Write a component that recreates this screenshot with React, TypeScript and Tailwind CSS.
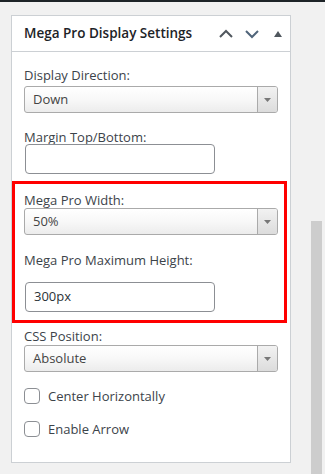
const font = { fontFamily: '"Open Sans", "Noto Sans", sans-serif' };

const Select = ({ value }: { value: string }) => (
  <div className="flex h-[27px] w-[254px] rounded-[3px] border border-[#aaaaaa] bg-gradient-to-b from-white via-[#f8f8f8] to-[#ececec] overflow-hidden">
    <div className="flex-1 flex items-center pl-[8px] text-[13px] text-[#444]">{value}</div>
    <div className="w-[20px] flex items-center justify-center border-l border-[#aaaaaa] bg-gradient-to-b from-[#f2f2f2] to-[#dcdcdc]">
      <svg width="7" height="4" viewBox="0 0 7 4">
        <path d="M0 0h7L3.5 4z" fill="#777" />
      </svg>
    </div>
  </div>
);

const TextInput = ({ value }: { value?: string }) => (
  <div className="h-[30px] w-[190px] rounded-[4px] border border-[#8c8f94] bg-white flex items-center pl-[8px] text-[13px] text-[#2c3338]">
    {value}
  </div>
);

const Label = ({ children }: { children: React.ReactNode }) => (
  <div className="text-[13px] leading-[18px] text-[#3c434a]">{children}</div>
);

const Checkbox = ({ label }: { label: string }) => (
  <div className="flex items-center gap-[8px]">
    <div className="w-[16px] h-[16px] rounded-[4px] border border-[#8c8f94] bg-white" />
    <span className="text-[13px] leading-[18px] text-[#3c434a]">{label}</span>
  </div>
);

export default function App() {
  return (
    <div className="w-[325px] h-[474px] bg-[#f1f1f1] border-t-2 border-[#1d2327] flex overflow-hidden" style={font}>
      <div className="ml-[11px] mt-[13px] w-[280px] h-[448px] bg-white border border-[#ccd0d4] flex flex-col">
        {/* header */}
        <div className="h-[36px] border-b border-[#ccd0d4] flex items-center pl-[12px] pr-[8px]">
          <h2 className="flex-1 text-[13.5px] font-semibold text-[#1d2327]">Mega Pro Display Settings</h2>
          <div className="flex items-center">
            <svg width="16" height="10" viewBox="0 0 16 10" className="mr-[10px]">
              <path d="M2 8l6-6 6 6" fill="none" stroke="#50575e" strokeWidth="2" />
            </svg>
            <svg width="16" height="10" viewBox="0 0 16 10" className="mr-[14px]">
              <path d="M2 2l6 6 6-6" fill="none" stroke="#50657a" strokeWidth="2" />
            </svg>
            <svg width="8" height="6" viewBox="0 0 8 6">
              <path d="M0 6L4 0l4 6z" fill="#50575e" />
            </svg>
          </div>
        </div>

        {/* body */}
        <div className="flex flex-col pt-[14px] pl-[12px]">
          <Label>Display Direction:</Label>
          <div className="mt-[2px]"><Select value="Down" /></div>

          <div className="mt-[15px]"><Label>Margin Top/Bottom:</Label></div>
          <div className="mt-[-2px] ml-[1px]"><TextInput /></div>

          <div className="mt-[7px] -ml-[12px] w-[275px] border-[3px] border-[#ff0000] pt-[7px] pl-[9px] pb-[8px]">
            <Label>Mega Pro Width:</Label>
            <div className="mt-[-1px]"><Select value="50%" /></div>
            <div className="mt-[16px]"><Label>Mega Pro Maximum Height:</Label></div>
            <div className="mt-[13px] ml-[1px]"><TextInput value="300px" /></div>
          </div>

          <div className="mt-[4px]"><Label>CSS Position:</Label></div>
          <div className="mt-[0px]"><Select value="Absolute" /></div>

          <div className="mt-[15px]"><Checkbox label="Center Horizontally" /></div>
          <div className="mt-[15px]"><Checkbox label="Enable Arrow" /></div>
        </div>
      </div>

      {/* scrollbar */}
      <div className="ml-[20px] w-[11px] flex flex-col">
        <div className="h-[219px]" />
        <div className="flex-1 bg-[#cdcdcd]" />
      </div>
    </div>
  );
}
